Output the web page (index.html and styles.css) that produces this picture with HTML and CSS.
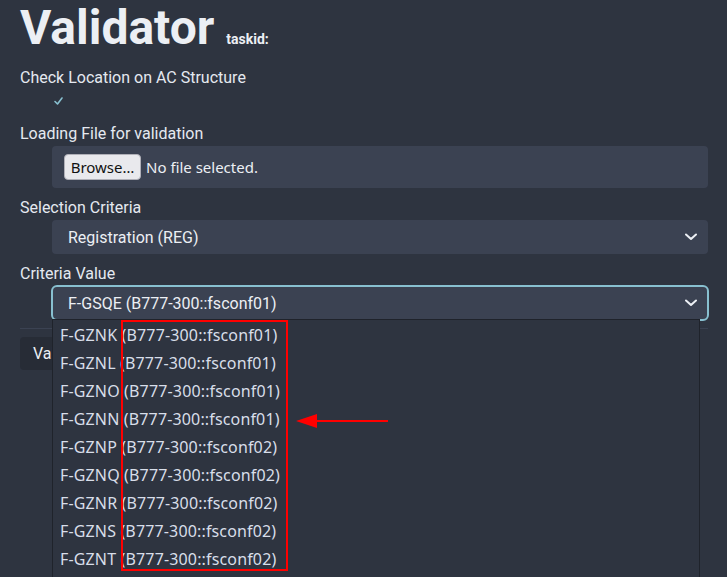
FILE: index.html
```html
<!DOCTYPE html>
<html lang="en">
<head>
<meta charset="utf-8">
<title>Validator</title>
<link rel="stylesheet" href="styles.css">
</head>
<body>
<main class="page">
  <h1 class="title">Validator <small class="taskid">taskid:</small></h1>

  <div class="field">
    <label class="label">Check Location on AC Structure</label>
    <div class="check-row">
      <svg class="check" width="16" height="16" viewBox="0 0 16 16"><path d="M3 7.5 L5.5 10 L10 4" fill="none" stroke="#88c0d0" stroke-width="1.6" stroke-linecap="round" stroke-linejoin="round"/></svg>
    </div>
  </div>

  <div class="field">
    <label class="label">Loading File for validation</label>
    <div class="file-box">
      <span class="browse">Browse…</span>
      <span class="nofile">No file selected.</span>
    </div>
  </div>

  <div class="field">
    <label class="label">Selection Criteria</label>
    <div class="select">
      <span>Registration (REG)</span>
      <svg class="chev" width="12" height="8" viewBox="0 0 12 8"><path d="M1 1.5 L6 6 L11 1.5" fill="none" stroke="#eceff4" stroke-width="2" stroke-linecap="round" stroke-linejoin="round"/></svg>
    </div>
  </div>

  <div class="field field-last">
    <label class="label">Criteria Value</label>
    <div class="select-wrap">
      <div class="select focused">
        <span>F-GSQE (B777-300::fsconf01)</span>
        <svg class="chev" width="12" height="8" viewBox="0 0 12 8"><path d="M1 1.5 L6 6 L11 1.5" fill="none" stroke="#eceff4" stroke-width="2" stroke-linecap="round" stroke-linejoin="round"/></svg>
      </div>
      <ul class="dropdown">
        <li>F-GZNK (B777-300::fsconf01)</li>
        <li>F-GZNL (B777-300::fsconf01)</li>
        <li>F-GZNO (B777-300::fsconf01)</li>
        <li>F-GZNN (B777-300::fsconf01)</li>
        <li>F-GZNP (B777-300::fsconf02)</li>
        <li>F-GZNQ (B777-300::fsconf02)</li>
        <li>F-GZNR (B777-300::fsconf02)</li>
        <li>F-GZNS (B777-300::fsconf02)</li>
        <li>F-GZNT (B777-300::fsconf02)</li>
      </ul>
    </div>
  </div>

  <hr class="sep">
  <button class="validate">Validate</button>

  <div class="annot-box"></div>
  <svg class="annot-arrow" width="96" height="18" viewBox="0 0 96 18">
    <line x1="18" y1="9" x2="94" y2="9" stroke="#ff0000" stroke-width="2"/>
    <polygon points="2,9 23,2 23,16" fill="#ff0000"/>
  </svg>
</main>
</body>
</html>
```

FILE: styles.css
```css
html, body {
  margin: 0;
  padding: 0;
  height: 100%;
  overflow: hidden;
  background: #2e3440;
}
body {
  font-family: Roboto, "Noto Sans", sans-serif;
  color: #e5e9f0;
  font-size: 16px;
}
.page {
  position: relative;
  padding: 0 19px 0 20px;
}
.title {
  margin: 0 0 10px 0;
  height: 56px;
  font-size: 48px;
  line-height: 56px;
  font-weight: 700;
  color: #eceff4;
}
.taskid {
  font-size: 14px;
  line-height: 1;
  font-weight: 700;
}
.field {
  margin-bottom: 8px;
}
.label {
  display: block;
  line-height: 24px;
  font-size: 16px;
  color: #e5e9f0;
}
.check-row {
  height: 24px;
  margin-left: 32px;
  display: flex;
  align-items: center;
}
.check {
  display: block;
}
.file-box {
  margin-left: 32px;
  height: 42px;
  box-sizing: border-box;
  background: #3b4252;
  border-radius: 4px;
  display: flex;
  align-items: center;
  padding-left: 12px;
  gap: 5px;
  font-family: "Noto Sans", sans-serif;
  font-size: 15px;
}
.browse {
  box-sizing: border-box;
  width: 77px;
  height: 26px;
  display: flex;
  align-items: center;
  justify-content: center;
  background: #e9e9ed;
  border: 1px solid #b0b0b8;
  border-radius: 4px;
  color: #111;
}
.nofile {
  color: #eceff4;
}
.select-wrap {
  position: relative;
  margin-left: 32px;
}
.select {
  margin-left: 32px;
  height: 34px;
  box-sizing: border-box;
  background: #3b4252;
  border-radius: 4px;
  display: flex;
  align-items: center;
  justify-content: space-between;
  padding: 0 11px 0 16px;
  color: #eceff4;
}
.select-wrap .select {
  margin-left: 0;
}
.focused {
  outline: 2px solid #88c0d0;
  outline-offset: -1px;
  border-radius: 5px;
}
.chev {
  display: block;
}
.dropdown {
  position: absolute;
  top: 33px;
  left: 0;
  width: 648px;
  height: 262px;
  box-sizing: border-box;
  margin: 0;
  padding: 1px 0 0 0;
  list-style: none;
  background: #2e3440;
  border: 1px solid #1f232b;
  border-bottom: 0;
  overflow: hidden;
  font-family: "Noto Sans", sans-serif;
  font-size: 16px;
  letter-spacing: 0.15px;
  color: #d8dee9;
  z-index: 2;
}
.dropdown li {
  height: 28px;
  line-height: 28px;
  padding-left: 7px;
  white-space: nowrap;
}
.sep {
  margin: 0 0 8px 0;
  border: 0;
  border-top: 1px solid #3b4252;
}
.field-last {
  margin-bottom: 8px;
}
.validate {
  height: 33px;
  padding: 0 13px;
  border: 0;
  border-radius: 4px;
  background: #272c36;
  color: #eceff4;
  font-family: Roboto, sans-serif;
  font-size: 16px;
}
.annot-box {
  position: absolute;
  left: 121px;
  top: 320px;
  width: 167px;
  height: 251px;
  box-sizing: border-box;
  border: 2px solid #ff0000;
  z-index: 3;
}
.annot-arrow {
  position: absolute;
  left: 294px;
  top: 412px;
  z-index: 3;
}
```
